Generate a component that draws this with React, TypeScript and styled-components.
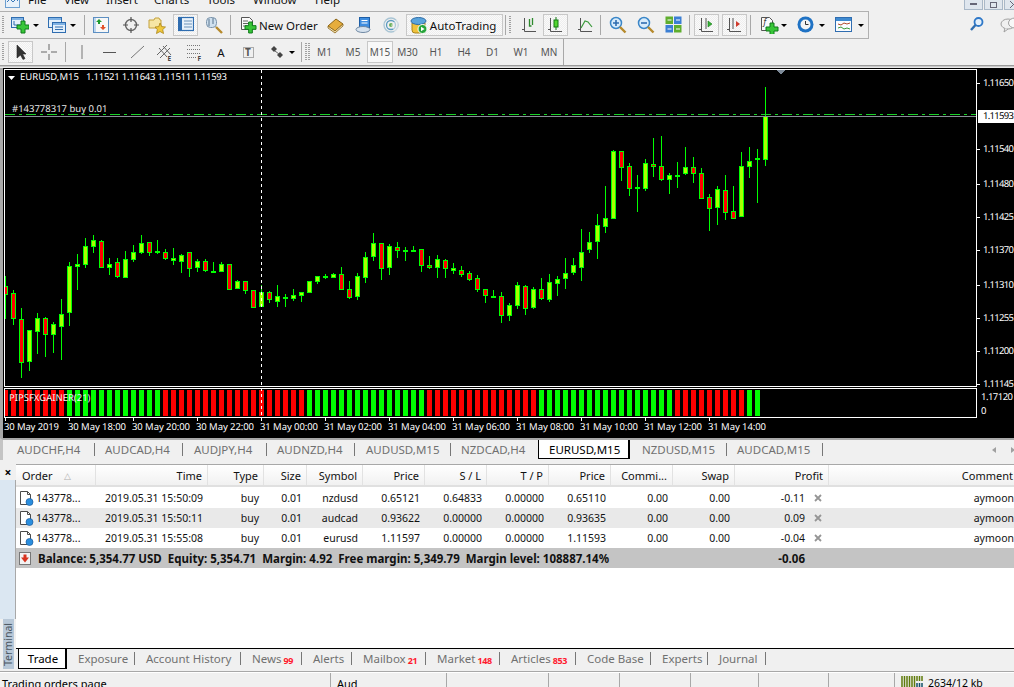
import React from "react";
import styled, { createGlobalStyle } from "styled-components";

const Global = createGlobalStyle`
  html, body { margin: 0; padding: 0; background: #f0f0f0; }
  #root { width: 1014px; height: 687px; overflow: hidden; }
`;

const FONT = `"Noto Sans", "Open Sans", sans-serif`;

const Page = styled.div`
  width: 1014px; height: 687px; display: flex; flex-direction: column; overflow: hidden;
  background: #f0f0f0; font-family: ${FONT}; font-size: 10.5px; color: #000;
`;

/* ---------- menu ---------- */
const MenuBar = styled.div`
  height: 11px; flex: none; display: flex; overflow: hidden; position: relative; padding-left: 5px;
`;
const MenuLogo = styled.div`margin-top: -6px; width: 15px; height: 14px; margin-right: 8px;`;
const MenuItem = styled.span<{ $w: number }>`
  width: ${(p) => p.$w}px; font-size: 11.5px; line-height: 14px; margin-top: -7px; color: #111;
`;
const WinButtons = styled.div`margin-left: auto; display: flex; gap: 1px; margin-right: -9px;`;
const WinButton = styled.div`
  width: 17px; height: 9px; border: 1px solid #a9b8c8; border-top: none; background: #dfe6ee;
  display: flex; align-items: center; justify-content: center;
`;

/* ---------- toolbars ---------- */
const BarRow = styled.div<{ $h: number }>`
  height: ${(p) => p.$h}px; flex: none; display: flex; align-items: stretch; justify-content: space-between;
`;
const ToolBar = styled.div<{ $w: number; $top?: boolean }>`
  width: ${(p) => p.$w}px; box-sizing: border-box; display: flex; align-items: center; background: #f0f0f0;
  border-top: ${(p) => (p.$top ? "1px solid #b0b0b0" : "none")};
  border-bottom: ${(p) => (p.$top ? "1px solid #b0b0b0" : "none")};
  border-right: 1px solid ${(p) => (p.$top ? "#b0b0b0" : "#a8a8a8")};
`;
const Grip = styled.i<{ $m?: number }>`
  width: 2px; height: 18px; margin-left: ${(p) => p.$m ?? 2}px; flex: none;
  background: repeating-linear-gradient(#a0a0a0 0 1px, transparent 1px 2px);
`;
const Sep = styled.i<{ $m: number }>`
  width: 1px; height: 20px; background: #a8a8a8; margin-left: ${(p) => p.$m}px; flex: none;
`;
const Tool = styled.div<{ $m: number; $w: number; $on?: boolean }>`
  margin-left: ${(p) => p.$m}px; width: ${(p) => p.$w}px; height: ${(p) => (p.$on ? "22px" : "auto")};
  flex: none; display: flex; align-items: center; justify-content: center; box-sizing: border-box; gap: 3px;
  ${(p) => p.$on && "border: 1px solid #c8c8c8; background: repeating-conic-gradient(#fafafa 0 25%, #eeeeee 0 50%) 0 0/2px 2px;"}
`;
const Caret = styled.i<{ $m: number }>`
  margin-left: ${(p) => p.$m}px; flex: none; width: 0; height: 0;
  border-left: 3px solid transparent; border-right: 3px solid transparent; border-top: 3px solid #000;
`;
const ToolText = styled.span<{ $m: number }>`
  margin-left: ${(p) => p.$m}px; font-size: 11.5px; white-space: nowrap; color: #111;
`;
const AutoBox = styled.div`
  margin-left: 7px; width: 97px; height: 22px; box-sizing: border-box; border: 1px solid #c8c8c8;
  display: flex; align-items: center; padding-left: 3px; flex: none;
  background: repeating-conic-gradient(#fafafa 0 25%, #eeeeee 0 50%) 0 0/2px 2px;
`;
const Period = styled.div<{ $w: number; $on?: boolean }>`
  width: ${(p) => p.$w}px; height: 22px; box-sizing: border-box; flex: none; display: flex; align-items: center;
  justify-content: center; font-size: 10px; color: #555;
  ${(p) => p.$on && "border: 1px solid #c8c8c8; background: #f8f8f8;"}
`;
const RightIcons = styled.div`display: flex; align-items: center; gap: 15px; margin-right: -8px;`;
const Shade = styled.div`
  height: 3px; flex: none; background: linear-gradient(#9a9a9a 0 1px, #c8c8c8 1px 2px, #e8e8e8 2px);
`;

/* ---------- chart ---------- */
const ChartWrap = styled.div`height: 370px; flex: none; background: #000; padding-left: 0; box-sizing: border-box; border-left: 3px solid #a8a8a8;`;
const ChartSvg = styled.svg`display: block; font-family: ${FONT};`;

/* ---------- chart tabs ---------- */
const ChartTabs = styled.div`
  height: 22px; flex: none; display: flex; align-items: stretch; box-sizing: border-box; padding-left: 5px;
  border-top: 2px solid #a8a8a8; border-left: 3px solid #c4c4c4; background: #f0f0f0; position: relative;
`;
const ChartTab = styled.div<{ $w: number; $p: number; $last?: boolean }>`
  font-size: 11.5px; color: #707070; width: ${(p) => p.$w}px; box-sizing: border-box; flex: none; padding-left: ${(p) => p.$p}px; white-space: nowrap; display: flex; align-items: center;
  position: relative; height: 19px;
  ${(p) => !p.$last && `&::after { content: ""; position: absolute; right: 0; top: 3px; height: 13px; width: 1px; background: #777; }`}
`;
const ChartTabActive = styled.div`
  font-size: 11.5px; color: #000; width: 92px; flex: none; padding-left: 10px; background: #fff; height: 19px; display: flex; align-items: center;
  box-sizing: border-box; border: 1px solid #000; border-top: none; border-right-width: 2px; white-space: nowrap;
  border-bottom-left-radius: 1px;
`;
const TabNav = styled.div`
  margin-left: auto; display: flex; gap: 15px; align-items: center; height: 19px; margin-right: -1px;
`;
const NavArrow = styled.i<{ $right?: boolean }>`
  width: 0; height: 0; border-top: 3.5px solid transparent; border-bottom: 3.5px solid transparent;
  ${(p) => (p.$right ? "border-left: 4px solid #a0a0a0;" : "border-right: 4px solid #a0a0a0;")}
`;

/* ---------- terminal ---------- */
const Terminal = styled.div`
  flex: 1; min-height: 0; display: flex; margin-top: 4px;
`;
const Strip = styled.div`
  width: 16px; flex: none; display: flex; flex-direction: column; box-sizing: border-box; background: #f0f0f0;
`;
const CloseBox = styled.div`
  height: 14px; flex: none; display: flex; align-items: center; justify-content: center; padding-top: 2px;
  font-size: 12px; font-weight: 700; line-height: 1; color: #000; background: #f0f0f0;
`;
const StripFill = styled.div`flex: 1; background: #dbe7f2; border-right: 1px solid #a8a8a8;`;
const StripLabel = styled.div`
  height: 50px; width: 11px; margin-left: 3px; background: #b8c8d8; color: #4a5560; box-sizing: border-box; padding-top: 3px;
  writing-mode: vertical-rl; transform: rotate(180deg); font-size: 10.5px; display: flex; align-items: center;
  justify-content: flex-start; line-height: 11px;
`;
const Main = styled.div`flex: 1; min-width: 0; display: flex; flex-direction: column; overflow: hidden;`;
const Sheet = styled.div`flex: 1; min-height: 0; background: #fff; overflow: hidden;`;
const COLS = "80px 112px 56px 43px 56px 62px 62px 62px 62px 62px 62px 94px 190px";
const Head = styled.div`
  display: grid; grid-template-columns: ${COLS}; height: 23px; box-sizing: border-box; width: 998px;
  border-top: 1px solid #a8a8a8; border-bottom: 2px solid #e0e0e0; margin-bottom: 1px;
  background: linear-gradient(#ffffff, #f1f1f1);
`;
const HeadCell = styled.div<{ $left?: boolean }>`
  display: flex; align-items: center; justify-content: ${(p) => (p.$left ? "space-between" : "flex-end")};
  padding: 1px 5px 0 ${(p) => (p.$left ? "6px" : "0")}; border-right: 1px solid #e2e2e2; font-size: 11px; color: #111; white-space: nowrap;
`;
const SortMark = styled.span`color: #b0b0b0; font-size: 9px; margin-right: 19px;`;
const Row = styled.div<{ $alt?: boolean }>`
  display: grid; grid-template-columns: ${COLS}; height: 20px; align-items: center; width: 998px;
  background: ${(p) => (p.$alt ? "#e9e9e9" : "#fff")};
`;
const Cell = styled.div`text-align: right; padding-right: 5px; white-space: nowrap; overflow: hidden; color: #111; font-size: 10.5px;`;
const OrderCell = styled.div`display: flex; align-items: center; gap: 2px; padding-left: 3px; font-size: 10.5px; color: #111;`;
const ProfitCell = styled.div`display: flex; justify-content: flex-end; align-items: center; gap: 9px; padding-right: 7px; font-size: 10.5px; color: #111;`;
const Balance = styled.div`
  display: grid; grid-template-columns: 719px 94px; height: 20px; align-items: center; background: #c4c4c4;
  font-weight: 700; font-size: 11.5px; color: #111; width: 998px;
`;
const BalanceText = styled.div`display: flex; align-items: center; padding-left: 3px; white-space: nowrap; gap: 6px;`;
const BalanceIcon = styled.div`margin-right: 1px; display: flex;`;
const BalanceProfit = styled.div`text-align: right; padding-right: 24px;`;

const BottomTabs = styled.div`
  height: 21px; flex: none; display: flex; border-top: 1px solid #000; box-sizing: border-box; background: #f0f0f0; margin-left: 0;
`;
const TradeTab = styled.div`
  margin-left: 2px; width: 49px; height: 20px; box-sizing: border-box; background: #fff; border: 1px solid #000; border-top: none;
  border-right-width: 2px; display: flex; align-items: center; justify-content: center; font-size: 11.5px; padding: 0 0 1px 2px; flex: none;
`;
const BTab = styled.div<{ $w: number }>`
  width: ${(p) => p.$w}px; box-sizing: border-box; flex: none;
  font-size: 11.5px; color: #707070; padding: 0 0 2px 11px; height: 20px; display: flex; align-items: center; position: relative; white-space: nowrap;
  &::after { content: ""; position: absolute; right: 0; top: 3px; height: 13px; width: 1px; background: #777; }
`;
const Count = styled.sup`
  color: #ff1a2e; font-size: 9px; font-weight: 700; margin-left: 2px; align-self: flex-end; line-height: 12px; vertical-align: baseline; letter-spacing: -0.4px;
`;
const TermEnd = styled.div`
  height: 4px; flex: none; background: linear-gradient(#f0f0f0 0 2px, #a8a8a8 2px 3px, #ffffff 3px);
`;
const Status = styled.div`flex: none; height: 14px; display: flex; overflow: hidden; background: #f0f0f0; font-size: 11px;`;
const StatusCell = styled.div<{ $w: number }>`
  width: ${(p) => p.$w}px; box-sizing: border-box; flex: none; border-right: 1px solid #a8a8a8; padding: 4px 0 0 6px; line-height: 14px; white-space: nowrap;
  &:first-child { padding-left: 2px; }
`;
const StatusLast = styled.div`display: flex; gap: 4px; padding: 3px 0 0 6px; line-height: 15px; white-space: nowrap; font-size: 10.5px;`;

/* ---------- icons ---------- */
const S = ({ w = 18, h = 18, children }: { w?: number; h?: number; children: React.ReactNode }) => (
  <svg width={w} height={h} viewBox={`0 0 ${w} ${h}`} style={{ display: "block", flex: "none" }}>{children}</svg>
);
const Plus = ({ x, y, s = 10 }: { x: number; y: number; s?: number }) => {
  const t = s / 3;
  return <path d={`M${x + t} ${y}h${t}v${t}h${t}v${t}h${-t}v${t}h${-t}v${-t}h${-t}v${-t}h${t}z`} fill="#38c638" stroke="#0f7a1a" strokeWidth="1" />;
};
const Win = ({ x, y, w, h }: { x: number; y: number; w: number; h: number }) => (
  <g>
    <rect x={x + 0.5} y={y + 0.5} width={w} height={h} fill="#e4f0fb" stroke="#2f6db0" />
    <rect x={x + 1} y={y + 1} width={w - 1} height={2} fill="#7fb2e4" />
  </g>
);
const NewChart = () => <S><Win x={0} y={1} w={12} h={10} /><path d="M3 5v4h6" stroke="#2f6db0" fill="none" /><Plus x={6} y={5} s={12} /></S>;
const Profiles = () => <S><Win x={0} y={1} w={13} h={10} /><Win x={4} y={6} w={13} h={10} /><path d="M7 11h8M7 13.5h8" stroke="#2f6db0" /></S>;
const MarketWatch = () => <S><rect x="1.5" y="1.5" width="15" height="15" fill="#f7f7f7" stroke="#5d8fc2" /><path d="M7 3l3 3H8v2H6V6H4z" fill="#1f9a2f" /><path d="M11 14l3-3h-2V9h-2v2H8z" fill="#e2502a" /><rect x="2" y="2" width="2" height="14" fill="#bcd6ee" /></S>;
const Cross = () => <S><circle cx="9" cy="9" r="5.5" fill="none" stroke="#666" strokeWidth="1.4" /><path d="M9 1v5M9 12v5M1 9h5M12 9h5" stroke="#555" strokeWidth="1.2" /></S>;
const FolderStar = () => <S w={19}><path d="M1 4h5l1-2h4l1 2h1v8H1z" fill="#f6e6a4" stroke="#c4a13c" /><path d="M12 7l1.7 3.6 3.8.4-2.8 2.6.8 3.9-3.5-2-3.5 2 .8-3.9L7 11l3.8-.4z" fill="#f0c83c" stroke="#a98416" strokeWidth=".8" /></S>;
const Navigator = () => <S w={16}><rect x=".5" y="1.5" width="15" height="13" fill="#e8f1fa" stroke="#2f6db0" strokeWidth="1.2" /><rect x="1" y="2" width="3" height="12" fill="#2f6db0" /><path d="M6 5h8M6 8h8M6 11h8" stroke="#6d93b8" /></S>;
const Tester = () => <S w={19}><rect x="1.5" y="1.5" width="10" height="10" rx="4" fill="#cfe0ee" stroke="#7a93aa" /><path d="M4 3v7M8 2v6" stroke="#58748e" /><path d="M11 11l6 6" stroke="#b68a2c" strokeWidth="2.4" /></S>;
const NewOrderIcon = () => <S w={17}><path d="M1.5 1.5h8l3 3v9h-11z" fill="#fafafa" stroke="#555" /><path d="M3 5h5M3 7.5h6M3 10h4" stroke="#666" /><Plus x={5} y={6} s={11} /></S>;
const Book = () => <S><path d="M1 10l8-7 7 5-8 7z" fill="#e6ad3c" stroke="#8c6516" /><path d="M1 10v2l7 5 8-7V8l-8 7z" fill="#f5e3b2" stroke="#8c6516" strokeWidth=".8" /></S>;
const Db = () => <S><rect x="4.5" y="1.5" width="10" height="10" fill="#3f8ee0" stroke="#1e5ea6" /><path d="M6.5 4.5h6M6.5 7h6" stroke="#fff" strokeWidth="1.2" /><ellipse cx="8" cy="13.5" rx="7" ry="3" fill="#d6e2ee" stroke="#6f88a3" /></S>;
const Signal = () => <S w={16}><circle cx="8" cy="9" r="7" fill="none" stroke="#a8c4d4" strokeWidth="1.3" /><circle cx="8" cy="9" r="4.5" fill="none" stroke="#5a9ac0" strokeWidth="1.3" /><circle cx="8" cy="9" r="2" fill="#69b05a" /><path d="M8 9l4 8h3V2z" fill="#f0f0f0" opacity=".55" /></S>;
const AutoIcon = () => <S><path d="M2 7h13v7a3 3 0 0 1-3 3H5a3 3 0 0 1-3-3z" fill="#f0c23c" stroke="#a8841c" /><ellipse cx="8.5" cy="5" rx="7.5" ry="3.5" fill="#5aa4dc" stroke="#2c6ba6" /><circle cx="12.5" cy="13" r="4.5" fill="#26a43a" stroke="#fff" /><path d="M11 10.8l3.6 2.2-3.6 2.2z" fill="#fff" /></S>;
const Axes = () => <path d="M3.5 2v13.5H15M1 13.5h2" fill="none" stroke="#555" />;
const ChBar = () => <S w={16}><Axes /><path d="M8.5 3v7h2M11.5 2v7" stroke="#2d8a2d" fill="none" strokeWidth="1.3" /></S>;
const ChCandle = () => <S w={16}><Axes /><rect x="7" y="4" width="4" height="7" fill="#52d62e" stroke="#127a12" /><path d="M9 1v3M9 11v3" stroke="#127a12" /></S>;
const ChLine = () => <S w={16}><Axes /><path d="M4 12l4-7 3 1 4 5" stroke="#3b9a3b" fill="none" strokeWidth="1.2" /></S>;
const ZoomIn = ({ plus }: { plus?: boolean }) => <S><circle cx="7" cy="7" r="5.5" fill="#d8ecfb" stroke="#3a86c8" strokeWidth="1.5" /><path d={plus ? "M4 7h6M7 4v6" : "M4 7h6"} stroke="#2f6db0" strokeWidth="1.6" /><path d="M11 11l5.5 5.5" stroke="#b68a2c" strokeWidth="2.4" /></S>;
const Tile = () => <S w={17}><rect x=".5" y=".5" width="7.5" height="7.5" fill="#5fae2e" /><rect x="9" y=".5" width="7.5" height="7.5" fill="#3b7fd4" /><rect x=".5" y="9" width="7.5" height="7.5" fill="#3b7fd4" /><rect x="9" y="9" width="7.5" height="7.5" fill="#5fae2e" /><path d="M2.5 4h4M11 4h4M2.5 13h4M11 13h4" stroke="#fff" /></S>;
const Shift = () => <S w={16}><Axes /><path d="M8 2v11" stroke="#555" /><path d="M10 5l4 3-4 3z" fill="#35b035" stroke="#127a12" strokeWidth=".6" /></S>;
const AutoS = () => <S w={16}><Axes /><path d="M7 2v11" stroke="#555" /><path d="M14 8l-4-3v6z" fill="#d03a2c" /></S>;
const IndPlus = () => <S w={19}><path d="M1.5 1.5h8l3 3v10h-11z" fill="#fafafa" stroke="#555" /><text x="3.5" y="9" fontSize="8" fontStyle="italic" fill="#333">f</text><Plus x={6} y={7} s={12} /></S>;
const Clock = () => <S w={17}><circle cx="8.5" cy="8.5" r="8" fill="#1f72c4" /><circle cx="8.5" cy="8.5" r="5" fill="#f4f4f4" /><path d="M8.5 5v3.5h3" stroke="#333" fill="none" /></S>;
const Templates = () => <S w={17}><rect x=".5" y="1.5" width="16" height="14" fill="#fafcff" stroke="#2f6db0" /><rect x="1" y="2" width="15" height="3" fill="#3f8ad0" /><path d="M3 8l3 1 3-2 3 1 3-1" stroke="#b04a2c" fill="none" /><path d="M3 12l3-1 3 2 3-1 3 1" stroke="#3a9a3a" fill="none" /></S>;
const Search = () => <S w={16}><circle cx="9.5" cy="6" r="4" fill="#e4f0fb" stroke="#2f78c8" strokeWidth="1.8" /><path d="M6.5 9L2 14" stroke="#2f6db0" strokeWidth="2.4" /></S>;
const Chat = () => <S w={22}><ellipse cx="8" cy="8" rx="7" ry="5" fill="#f0f0f0" stroke="#a0a0a0" /><ellipse cx="15" cy="7" rx="6.5" ry="5" fill="#f8f8f8" stroke="#a0a0a0" /><path d="M5 12l-1 4 4-3" fill="#f0f0f0" stroke="#a0a0a0" /></S>;
const Arrow = () => <S w={12} h={16}><path d="M2 1v13l3.5-3 2.5 4.5 2-1-2.5-4.5H11z" fill="#333" stroke="#222" strokeWidth=".6" /></S>;
const Crosshair = () => <S w={16} h={16}><path d="M8 0v6M8 10v6M0 8h6M10 8h6" stroke="#666" /></S>;
const VLine = () => <S w={4} h={14}><path d="M2 0v14" stroke="#777" /></S>;
const HLine = () => <S w={13} h={3}><path d="M0 1.5h13" stroke="#555" /></S>;
const Trend = () => <S w={15} h={14}><path d="M1 13L14 1" stroke="#777" strokeWidth="1" /></S>;
const Channel = () => <S w={17} h={17}><path d="M1 11L11 1M4 14L14 4M3 4l8 9M7 2l8 9" stroke="#666" /><text x="11.5" y="17" fontSize="6.5" fontWeight="700" fill="#444">E</text></S>;
const Fibo = () => <S w={17} h={17}><path d="M1 1.5h14M1 5.5h14M1 9.5h14M1 13.5h10" stroke="#777" strokeDasharray="1 1" /><text x="11.5" y="17" fontSize="6.5" fontWeight="700" fill="#444">F</text></S>;
const TextBox = () => <S w={13} h={14}><rect x="1.5" y="2.5" width="10" height="10" fill="none" stroke="#666" strokeDasharray="1 1" /><text x="3" y="11" fontSize="10" fontWeight="700" fill="#555">T</text></S>;
const Arrows = () => <S w={14} h={14}><path d="M4 1l3 3-3 3-3-3z" fill="#444" /><path d="M10 7l3 3-3 3-3-3z" fill="#444" /><path d="M5 6l4 3" stroke="#666" /></S>;
const DocIcon = () => <S w={15} h={16}><path d="M1.5 1.5h7l3 3v10h-10z" fill="#fff" stroke="#4a4a4a" /><path d="M8.5 1.500v3h3" fill="none" stroke="#4a4a4a" /><circle cx="10.500" cy="12" r="3.500" fill="#2a8ede" stroke="#1a5a9c" strokeWidth=".7" /></S>;
const XMark = () => <S w={8} h={8}><path d="M1 1l6 6M7 1L1 7" stroke="#959595" strokeWidth="1.8" /></S>;
const BalIcon = () => <S w={12} h={13}><rect x=".5" y=".5" width="11" height="12" fill="#f3f3f3" stroke="#777" /><path d="M4.5 2.5h3v3H10l-4 5-4-5h2.500z" fill="#d8321e" /></S>;
const Logo = () => <S w={15} h={14}><rect x=".5" y=".5" width="14" height="13" fill="#e8f1fa" stroke="#6d9fd0" /><path d="M2 8l3-3 3 3 3-3 2 2" stroke="#3a78b8" fill="none" /></S>;
const Bars = () => <S w={23} h={11}><path d="M1 0v11M3.500 0v11M6 0v11M8.500 0v11M11 0v11M13.500 0v11" stroke="#5f7a0a" strokeWidth="1.5" /><path d="M16 0v5M18.500 0v5M21 0v5" stroke="#5f7a0a" strokeWidth="1.500" /><path d="M16 7v4M18.500 7v4M21 7v4" stroke="#12506a" strokeWidth="1.500" /></S>;

/* ---------- chart data: [wickTop, wickBottom, bodyTop, bodyBottom, kind] in 3x crop units ---------- */
type C = [number, number, number, number, 0 | 1 | 2];
const L: C[] = [
  [438,567,468,494,1],[480,585,489,567,1],[534,744,567,698,1],[600,723,600,696,0],[549,672,564,606,0],[561,681,564,615,1],[576,669,582,615,0],[507,690,552,591,0],[396,588,408,549,0],[372,480,402,411,0],
  [324,414,348,405,0],[315,369,330,351,0],[330,414,333,414,1],[384,435,402,414,0],[384,444,396,441,1],[363,444,387,444,0],[345,396,366,390,0],[315,372,339,369,0],[336,378,336,369,1],[330,372,363,369,2],
  [357,390,366,387,1],[354,405,384,393,0],[372,429,375,396,0],[366,441,366,417,1],[387,426,393,414,0],[387,426,393,423,1],[396,426,423,426,2],[396,426,402,426,0],[402,480,402,480,1],[450,477,453,477,0],
  [453,492,453,483,1],[480,534,480,534,1],[465,531,486,531,0],[483,519,486,510,1],[465,531,498,516,0],[492,531,501,507,2],[477,513,495,507,0],[486,516,486,498,0],[453,489,453,489,0],[438,462,438,456,0],
  [432,447,438,441,2],[429,444,432,444,0],[411,480,432,480,1],[453,507,477,504,1],[429,510,438,501,0],[366,459,381,444,0],[309,393,339,381,0],[339,450,339,417,1],[342,435,348,414,0],[336,384,351,363,1],
  [351,393,360,366,2],[348,366,360,363,2],[357,426,357,408,1],[378,417,405,414,1],[375,444,387,414,0],[387,444,390,417,1],[399,432,414,423,0],[408,441,420,435,1],[423,453,429,450,1],[435,486,444,480,1],
  [477,519,477,498,1],[480,504,498,501,2],[486,579,498,558,1],[519,573,525,558,0],[456,537,465,528,0],[465,555,468,537,1],[471,537,477,534,0],[444,510,477,507,1],[432,516,456,510,0],[438,498,447,462,0],
  [384,477,429,447,0],[384,435,405,429,0],[297,453,366,414,0],[306,369,336,360,0],[252,387,285,336,0],[168,309,264,291,0],[60,267,63,267,0],[63,153,63,114,1],[99,198,108,177,1],[135,246,171,177,2],
  [87,183,99,177,0],[24,141,102,111,1],[18,153,108,150,1],[129,192,135,150,0],[96,174,135,141,2],[51,135,111,132,0],[81,159,111,132,1],[114,207,129,207,1],[192,303,201,237,1],[168,285,177,234,0],
  [135,270,180,249,1],[168,267,243,267,1],[66,261,108,261,0],[51,144,93,111,0],[57,219,84,87,2],[-129,108,-42,90,0],
];
const Y0 = 68; // svg origin in page coordinates
const cy = (v: number) => Math.round(130 + v / 3) - Y0;
const isGreenBar = (k: number) => (k >= 8 && k <= 19) || (k >= 38 && k <= 52) || (k >= 67 && k <= 83) || k === 93 || k === 94;
const prices: [string, number][] = [["1.11650",83],["1.11540",149],["1.11480",184],["1.11425",217],["1.11370",250],["1.11310",285],["1.11255",318],["1.11200",351],["1.11145",384]];
const times = ["30 May 2019","30 May 18:00","30 May 20:00","30 May 22:00","31 May 00:00","31 May 02:00","31 May 04:00","31 May 06:00","31 May 08:00","31 May 10:00","31 May 12:00","31 May 14:00"];

const Chart = () => {
  const dx = -3; // wrapper has a 3px left edge
  const tx = (x: number) => x + dx;
  return (
    <ChartSvg width={1011} height={370} viewBox="0 0 1011 370" shapeRendering="crispEdges">
      <defs><clipPath id="pane"><rect x={tx(5)} y={1} width={972} height={317} /></clipPath></defs>
      <rect x={tx(4.5)} y={1.5} width={972} height={317} fill="none" stroke="#fff" />
      <rect x={tx(4.5)} y={320.5} width={972} height={29} fill="none" stroke="#fff" />
      <g clipPath="url(#pane)">
        {L.map(([wt, wb, bt, bb, kind], k) => {
          const x = tx(5 + 8 * k);
          const t = cy(bt), h = Math.max(cy(bb) - t, 2);
          return (
            <g key={k}>
              <rect x={x} y={cy(wt)} width={1} height={cy(wb) - cy(wt)} fill="#00ff00" />
              <rect x={x - 2} y={t} width={5} height={h} fill="#00ff00" />
              {kind !== 2 && h > 2 && <rect x={x - 1} y={t + 1} width={3} height={h - 2} fill={kind === 1 ? "#ff0000" : "#a8ff00"} />}
            </g>
          );
        })}
      </g>
      {Array.from({ length: 95 }, (_, k) => (
        <rect key={k} x={tx(Math.max(5, 3 + 8 * k))} y={322} width={k === 0 ? 3 : 5} height={26} fill={isGreenBar(k) ? "#00ff00" : "#ff0000"} />
      ))}
      <path d={`M${tx(4.5)} 48.500H${tx(976)}`} stroke="#8a8f98" />
      <path d={`M${tx(5)} 46.500H${tx(976)}`} stroke="#18d028" strokeDasharray="10 4 3 4" />
      <path d={`M${tx(261.5)} 2V349`} stroke="#fff" strokeDasharray="3 3" />
      <path d={`M${tx(777)} 2h8l-4 4.500z`} fill="#7d8a98" />
      <path d={`M${tx(8)} 8h7l-3.500 4z`} fill="#fff" shapeRendering="auto" />
      <g fill="#fff" fontSize="9.500" shapeRendering="auto" textRendering="geometricPrecision">
        <text x={tx(20)} y={12}>EURUSD,M15</text>
        <text x={tx(86)} y={12} textLength={141}>1.11521 1.11643 1.11511 1.11593</text>
        <text x={tx(12)} y={44} fill="#e8e8e8">#143778317 buy 0.01</text>
        <text x={tx(9)} y={333} fill="#f4f4f4">PIPSFXGAINER(21)</text>
        {prices.map(([p, y]) => (
          <g key={p}>
            <rect x={tx(977)} y={y - Y0} width={3} height={1} shapeRendering="crispEdges" />
            <text x={tx(983)} y={y - Y0 + 3} textLength={31}>{p}</text>
          </g>
        ))}
        <text x={tx(981)} y={332} textLength={32}>1.17120</text>
        <text x={tx(981)} y={346}>0</text>
        {times.map((t, i) => (
          <g key={t}>
            <rect x={tx(5 + 64 * i)} y={350} width={1} height={3} shapeRendering="crispEdges" />
            <text x={tx(4 + 64 * i)} y={362} textLength={i === 0 ? 55 : 58}>{t}</text>
          </g>
        ))}
      </g>
      <rect x={tx(978)} y={42} width={36} height={13} fill="#fff" />
      <text x={tx(983)} y={51} fontSize="9.500" fill="#000" textLength={31} textRendering="geometricPrecision">1.11593</text>
    </ChartSvg>
  );
};

const orders = [
  ["2019.05.31 15:50:09","buy","0.01","nzdusd","0.65121","0.64833","0.00000","0.65110","0.00","0.00","-0.11"],
  ["2019.05.31 15:50:11","buy","0.01","audcad","0.93622","0.00000","0.00000","0.93635","0.00","0.00","0.09"],
  ["2019.05.31 15:55:08","buy","0.01","eurusd","1.11597","0.00000","0.00000","1.11593","0.00","0.00","-0.04"],
];
const heads = ["Time","Type","Size","Symbol","Price","S / L","T / P","Price","Commi...","Swap","Profit","Comment"];
const periods: [string, number, boolean?][] = [["M1",29],["M5",28],["M15",26,true],["M30",29],["H1",28],["H4",28],["D1",29],["W1",28],["MN",28]];
const chartTabs: [string, number, number][] = [["AUDCHF,H4",87,9],["AUDCAD,H4",88,10],["AUDJPY,H4",84,11],["AUDNZD,H4",88,10],["AUDUSD,M15",96,11]];
const bottomTabs: [string, number, string?][] = [["Exposure",68],["Account History",106],["News",61,"99"],["Alerts",50],["Mailbox",74,"21"],["Market",74,"148"],["Articles",76,"853"],["Code Base",75],["Experts",57],["Journal",58]];

export default function App() {
  return (
    <Page>
      <Global />
      <MenuBar>
        <MenuLogo><Logo /></MenuLogo>
        <MenuItem $w={36}>File</MenuItem>
        <MenuItem $w={42}>View</MenuItem>
        <MenuItem $w={48}>Insert</MenuItem>
        <MenuItem $w={53}>Charts</MenuItem>
        <MenuItem $w={46}>Tools</MenuItem>
        <MenuItem $w={62}>Window</MenuItem>
        <MenuItem $w={40}>Help</MenuItem>
        <WinButtons>
          <WinButton><S w={7} h={3}><rect width="7" height="2" fill="#667" /></S></WinButton>
          <WinButton><S w={8} h={7}><rect x=".5" y="1.500" width="6" height="5" fill="none" stroke="#667" /></S></WinButton>
          <WinButton><S w={7} h={7}><path d="M0 0l7 7M7 0L0 7" stroke="#667" /></S></WinButton>
        </WinButtons>
      </MenuBar>

      <BarRow $h={28}>
        <ToolBar $w={869} $top>
          <Grip />
          <Tool $m={7} $w={18}><NewChart /></Tool>
          <Caret $m={4} />
          <Tool $m={9} $w={18}><Profiles /></Tool>
          <Caret $m={4} />
          <Sep $m={8} />
          <Tool $m={7} $w={18}><MarketWatch /></Tool>
          <Tool $m={12} $w={18}><Cross /></Tool>
          <Tool $m={8} $w={19}><FolderStar /></Tool>
          <Tool $m={6} $w={25} $on><Navigator /></Tool>
          <Tool $m={7} $w={19}><Tester /></Tool>
          <Sep $m={6} />
          <Tool $m={9} $w={17}><NewOrderIcon /></Tool>
          <ToolText $m={2}>New Order</ToolText>
          <Tool $m={9} $w={18}><Book /></Tool>
          <Tool $m={10} $w={18}><Db /></Tool>
          <Tool $m={10} $w={16}><Signal /></Tool>
          <AutoBox><AutoIcon /><ToolText $m={2}>AutoTrading</ToolText></AutoBox>
          <Sep $m={2} />
          <Grip $m={3} />
          <Tool $m={10} $w={16}><ChBar /></Tool>
          <Tool $m={6} $w={25} $on><ChCandle /></Tool>
          <Tool $m={9} $w={16}><ChLine /></Tool>
          <Sep $m={7} />
          <Tool $m={8} $w={18}><ZoomIn plus /></Tool>
          <Tool $m={10} $w={18}><ZoomIn /></Tool>
          <Tool $m={10} $w={17}><Tile /></Tool>
          <Sep $m={7} />
          <Tool $m={4} $w={25} $on><Shift /></Tool>
          <Tool $m={3} $w={25} $on><AutoS /></Tool>
          <Sep $m={3} />
          <Tool $m={9} $w={19}><IndPlus /></Tool>
          <Caret $m={2} />
          <Tool $m={10} $w={17}><Clock /></Tool>
          <Caret $m={5} />
          <Tool $m={10} $w={17}><Templates /></Tool>
          <Caret $m={6} />
        </ToolBar>
        <RightIcons><Search /><Chat /></RightIcons>
      </BarRow>
      <BarRow $h={26}>
        <ToolBar $w={564}>
          <Grip />
          <Tool $m={4} $w={25} $on><Arrow /></Tool>
          <Tool $m={8} $w={16}><Crosshair /></Tool>
          <Sep $m={8} />
          <Tool $m={14} $w={4}><VLine /></Tool>
          <Tool $m={19} $w={13}><HLine /></Tool>
          <Tool $m={14} $w={15}><Trend /></Tool>
          <Tool $m={11} $w={17}><Channel /></Tool>
          <Tool $m={13} $w={17}><Fibo /></Tool>
          <Tool $m={13} $w={10}><ToolText $m={0}>A</ToolText></Tool>
          <Tool $m={16} $w={13}><TextBox /></Tool>
          <Tool $m={15} $w={14}><Arrows /></Tool>
          <Caret $m={5} />
          <Sep $m={6} />
          <Grip $m={3} />
          <Grip $m={1} />
          {periods.map(([n, w, on]) => <Period key={n} $w={w} $on={on}>{n}</Period>)}
        </ToolBar>
      </BarRow>
      <Shade />

      <ChartWrap><Chart /></ChartWrap>

      <ChartTabs>
        {chartTabs.map(([n, w, p]) => <ChartTab key={n} $w={w} $p={p}>{n}</ChartTab>)}
        <ChartTab $w={87} $p={10} $last>NZDCAD,H4</ChartTab>
        <ChartTabActive>EURUSD,M15</ChartTabActive>
        <ChartTab $w={97} $p={12}>NZDUSD,M15</ChartTab>
        <ChartTab $w={96} $p={10}>AUDCAD,M15</ChartTab>
        <TabNav><NavArrow /><NavArrow $right /></TabNav>
      </ChartTabs>

      <Terminal>
        <Strip>
          <CloseBox>×</CloseBox>
          <StripFill />
          <StripLabel>Terminal</StripLabel>
        </Strip>
        <Main>
          <Sheet>
            <Head>
              <HeadCell $left>Order<SortMark>△</SortMark></HeadCell>
              {heads.map((h, i) => <HeadCell key={i}>{h}</HeadCell>)}
            </Head>
            {orders.map((o, i) => (
              <Row key={i} $alt={i === 1}>
                <OrderCell><DocIcon />143778...</OrderCell>
                {o.slice(0, 10).map((v, j) => <Cell key={j}>{v}</Cell>)}
                <ProfitCell>{o[10]}<XMark /></ProfitCell>
                <Cell>aymoon</Cell>
              </Row>
            ))}
            <Balance>
              <BalanceText>
                <BalanceIcon><BalIcon /></BalanceIcon>
                <span>Balance: 5,354.77 USD</span>
                <span>Equity: 5,354.71</span>
                <span>Margin: 4.92</span>
                <span>Free margin: 5,349.79</span>
                <span>Margin level: 108887.14%</span>
              </BalanceText>
              <BalanceProfit>-0.06</BalanceProfit>
            </Balance>
          </Sheet>
          <BottomTabs>
            <TradeTab>Trade</TradeTab>
            {bottomTabs.map(([n, w, c]) => <BTab key={n} $w={w}>{n}{c && <Count>{c}</Count>}</BTab>)}
          </BottomTabs>
        </Main>
      </Terminal>
      <TermEnd />
      <Status>
        <StatusCell $w={331}>Trading orders page</StatusCell>
        <StatusCell $w={116}>Aud</StatusCell>
        <StatusCell $w={102} />
        <StatusCell $w={71} />
        <StatusCell $w={71} />
        <StatusCell $w={68} />
        <StatusCell $w={70} />
        <StatusCell $w={66} />
        <StatusLast><Bars /><span>2634/12 kb</span></StatusLast>
      </Status>
    </Page>
  );
}
